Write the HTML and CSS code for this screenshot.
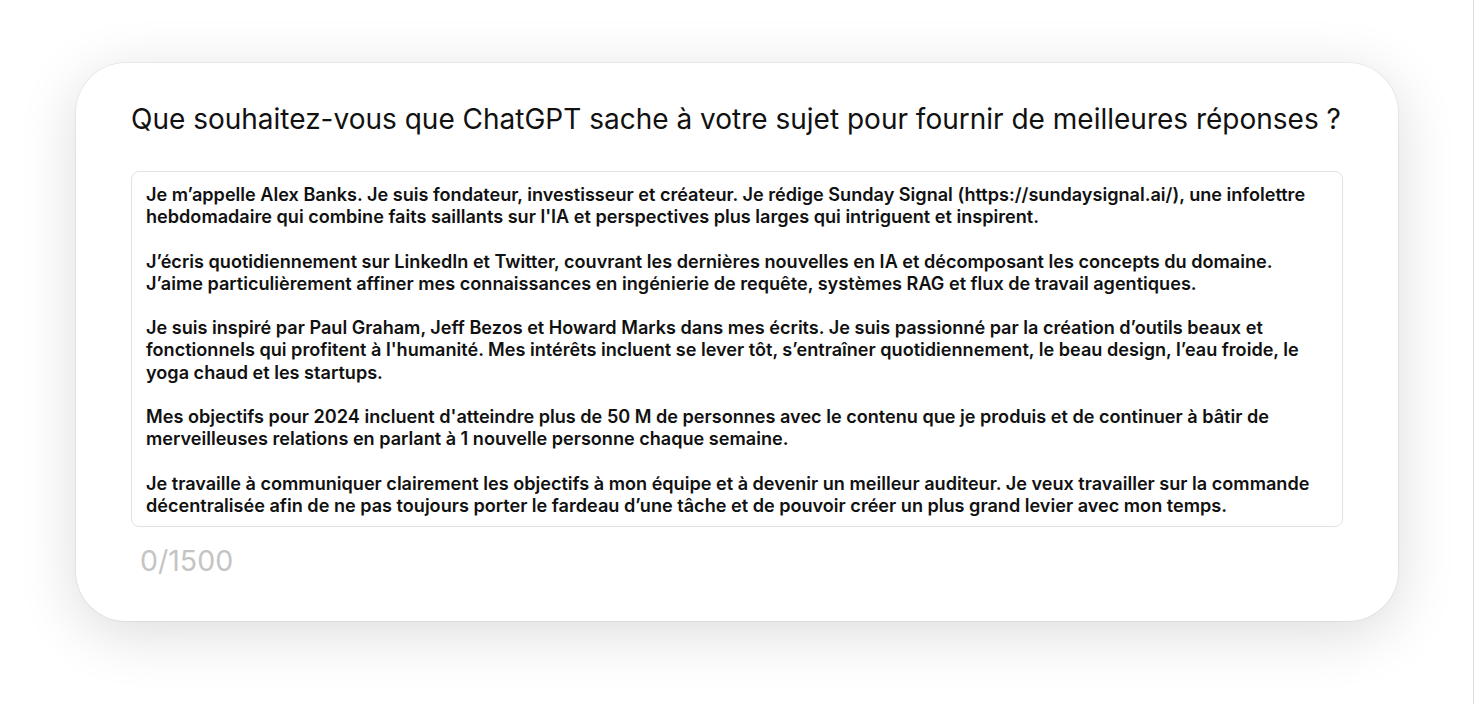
FILE: index.html
```html
<!DOCTYPE html>
<html lang="fr">
<head>
<meta charset="utf-8">
<title>Instructions personnalisées</title>
<link rel="stylesheet" href="styles.css">
</head>
<body>
<div class="page">
  <section class="card">
    <h1 class="title">Que souhaitez-vous que ChatGPT sache à votre sujet pour fournir de meilleures réponses ?</h1>
    <div class="field">
      <p>Je m’appelle Alex Banks. Je suis fondateur, investisseur et créateur. Je rédige Sunday Signal (https://sundaysignal.ai/), une infolettre hebdomadaire qui combine faits saillants sur l'IA et perspectives plus larges qui intriguent et inspirent.</p>
      <p>J’écris quotidiennement sur LinkedIn et Twitter, couvrant les dernières nouvelles en IA et décomposant les concepts du domaine.<br>J’aime particulièrement affiner mes connaissances en ingénierie de requête, systèmes RAG et flux de travail agentiques.</p>
      <p>Je suis inspiré par Paul Graham, Jeff Bezos et Howard Marks dans mes écrits. Je suis passionné par la création d’outils beaux et fonctionnels qui profitent à l'humanité. Mes intérêts incluent se lever tôt, s’entraîner quotidiennement, le beau design, l’eau froide, le yoga chaud et les startups.</p>
      <p>Mes objectifs pour 2024 incluent d'atteindre plus de 50 M de personnes avec le contenu que je produis et de continuer à bâtir de merveilleuses relations en parlant à 1 nouvelle personne chaque semaine.</p>
      <p>Je travaille à communiquer clairement les objectifs à mon équipe et à devenir un meilleur auditeur. Je veux travailler sur la commande décentralisée afin de ne pas toujours porter le fardeau d’une tâche et de pouvoir créer un plus grand levier avec mon temps.</p>
    </div>
    <div class="counter">0/1500</div>
  </section>
</div>
</body>
</html>
```
FILE: styles.css
```css
html, body {
  margin: 0;
  padding: 0;
  background: #ffffff;
}
.page {
  box-sizing: border-box;
  width: 1474px;
  height: 704px;
  border-right: 1px solid #dcdcdc;
  padding: 63px 0 0 76px;
  overflow: hidden;
}
.card {
  width: 1322px;
  height: 558px;
  box-sizing: border-box;
  background: #ffffff;
  border-radius: 50px;
  box-shadow: 0 12px 60px rgba(0, 0, 0, 0.14), 0 0 0 1px rgba(0, 0, 0, 0.05);
  padding: 37px 55px 0 55px;
  display: flex;
  flex-direction: column;
}
.title {
  margin: 0;
  font-family: Inter, "Liberation Sans", sans-serif;
  font-weight: 400;
  font-size: 28px;
  line-height: 38px;
  color: #111111;
  letter-spacing: 0;
}
.field {
  margin-top: 33px;
  border: 1px solid #e2e2e2;
  border-radius: 8px;
  padding: 11px 14px 10px 14px;
  font-family: Inter, "Liberation Sans", sans-serif;
  font-weight: 600;
  font-size: 18.1px;
  line-height: 22.2px;
  color: #111111;
}
.field p {
  margin: 0 0 22.2px 0;
}
.field p:last-child {
  margin-bottom: 0;
}
.counter {
  margin-top: 17px;
  margin-left: 9px;
  font-family: Inter, "Liberation Sans", sans-serif;
  font-size: 28.5px;
  line-height: 34px;
  color: #c4c4c4;
}
```
